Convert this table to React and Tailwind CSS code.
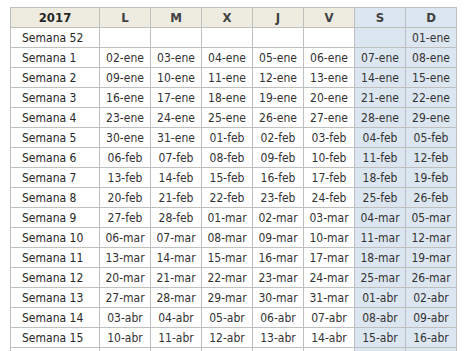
import React from "react";

const months = ["ene", "feb", "mar", "abr", "may"];
const days = ["L", "M", "X", "J", "V", "S", "D"];

function fmt(d) {
  return String(d.getDate()).padStart(2, "0") + "-" + months[d.getMonth()];
}

function buildRows() {
  const rows = [{ label: "Semana 52", cells: ["", "", "", "", "", "", "01-ene"] }];
  for (let w = 1; w <= 15; w++) {
    const cells = [];
    for (let i = 0; i < 7; i++) {
      cells.push(fmt(new Date(2017, 0, 2 + (w - 1) * 7 + i)));
    }
    rows.push({ label: "Semana " + w, cells });
  }
  rows.push({ label: "", cells: ["", "", "", "", "", "", ""] });
  return rows;
}

export default function App() {
  const rows = buildRows();
  return (
    <main
      className="h-[351px] w-[465px] overflow-hidden bg-white pl-[10px] pt-[7px] text-[#262626]"
      style={{ fontFamily: '"DejaVu Sans Condensed", "DejaVu Sans", Verdana, sans-serif' }}
    >
      <div className="w-fit border-l border-t border-[#bfbfbf]">
        <div className="grid grid-cols-[89px_repeat(7,51px)]">
          <div className="flex h-5 items-center justify-center border-b border-r border-[#bfbfbf] bg-[#eeece1] text-[13px] font-bold">
            2017
          </div>
          {days.map((d, i) => (
            <div
              key={d}
              className={
                i >= 5
                  ? "flex h-5 items-center justify-center border-b border-r border-[#bfbfbf] bg-[#dce6f1] text-[13px] font-bold text-[#404040]"
                  : "flex h-5 items-center justify-center border-b border-r border-[#bfbfbf] bg-[#eeece1] text-[13px] font-bold text-[#404040]"
              }
            >
              {d}
            </div>
          ))}
          {rows.map((r, ri) => (
            <React.Fragment key={ri}>
              <div className="flex h-5 items-center border-b border-r border-[#bfbfbf] pl-[11px] text-[12px]">
                {r.label}
              </div>
              {r.cells.map((c, ci) => (
                <div
                  key={ci}
                  className={
                    ci >= 5
                      ? "flex h-5 items-center justify-center border-b border-r border-[#bfbfbf] bg-[#dce6f1] text-[12px] text-[#333]"
                      : "flex h-5 items-center justify-center border-b border-r border-[#bfbfbf] text-[12px] text-[#333]"
                  }
                >
                  {c}
                </div>
              ))}
            </React.Fragment>
          ))}
        </div>
      </div>
    </main>
  );
}
